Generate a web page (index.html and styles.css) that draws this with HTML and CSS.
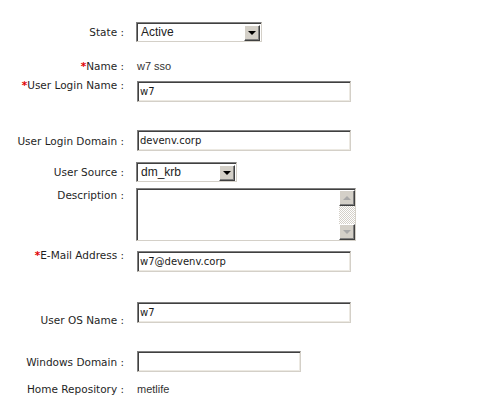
FILE: index.html
```html
<!DOCTYPE html>
<html>
<head>
<meta charset="utf-8">
<link rel="stylesheet" href="styles.css">
</head>
<body>
<form class="form">
  <div class="row r1">
    <label class="label">State :</label>
    <div class="select sel-state"><span class="sel-text">Active</span><span class="sel-btn"><span class="tri"></span></span></div>
  </div>
  <div class="row r2">
    <label class="label"><span class="req">*</span>Name :</label>
    <span class="value">w7 sso</span>
  </div>
  <div class="row r3">
    <label class="label"><span class="req">*</span>User Login Name :</label>
    <div class="input wide">w7</div>
  </div>
  <div class="row r4">
    <label class="label">User Login Domain :</label>
    <div class="input wide">devenv.corp</div>
  </div>
  <div class="row r5">
    <label class="label">User Source :</label>
    <div class="select sel-source"><span class="sel-text">dm_krb</span><span class="sel-btn"><span class="tri"></span></span></div>
  </div>
  <div class="row r6">
    <label class="label">Description :</label>
    <div class="textarea">
      <div class="ta-body"></div>
      <div class="scroll">
        <span class="sb-btn"><span class="tri up"></span></span>
        <span class="sb-track"></span>
        <span class="sb-btn"><span class="tri dn"></span></span>
      </div>
    </div>
  </div>
  <div class="row r7">
    <label class="label"><span class="req">*</span>E-Mail Address :</label>
    <div class="input wide">w7@devenv.corp</div>
  </div>
  <div class="row r8">
    <label class="label">User OS Name :</label>
    <div class="input wide">w7</div>
  </div>
  <div class="row r9">
    <label class="label">Windows Domain :</label>
    <div class="input narrow"></div>
  </div>
  <div class="row r10">
    <label class="label">Home Repository :</label>
    <span class="value">metlife</span>
  </div>
</form>
</body>
</html>
```
FILE: styles.css
```css
html, body { margin: 0; padding: 0; background: #fff; }
body { width: 492px; height: 401px; overflow: hidden; }
.form { display: flex; flex-direction: column; }
.row { display: flex; }
.label {
  width: 124px; margin-right: 12px; text-align: right; flex: none;
  font-family: "DejaVu Sans", sans-serif; font-size: 10.5px; line-height: 14px;
  color: #1f1f1f;
}
.req { color: #e00000; font-weight: bold; }
.value { font-family: "Liberation Sans", Arial, sans-serif; font-size: 11px; line-height: 14px; color: #333; padding-left: 1px; }

.input {
  box-sizing: border-box; height: 21px; margin-left: 1px;
  border-style: solid; border-width: 1px;
  border-color: #808080 #d4d0c8 #d4d0c8 #808080;
  box-shadow: inset 1px 1px 0 #404040, inset -1px -1px 0 #ece9e2;
  background: #fff;
  font-family: "DejaVu Sans", sans-serif; font-size: 10px; line-height: 19px;
  color: #1a1a1a; padding: 0 3px 0 2px;
}
.wide { width: 214px; }
.narrow { width: 164px; }

.select {
  box-sizing: border-box; height: 20px; display: flex; align-items: center;
  border-style: solid; border-width: 1px;
  border-color: #808080 #d4d0c8 #d4d0c8 #808080;
  box-shadow: inset 1px 1px 0 #404040;
  background: #fff;
  font-family: "Liberation Sans", Arial, sans-serif; font-size: 12px; color: #222;
}
.sel-state { width: 126px; }
.sel-source { width: 101px; }
.sel-text { flex: 1; padding-left: 4px; line-height: 16px; }
.sel-btn {
  box-sizing: border-box; width: 16px; height: 16px; margin-right: 1px; margin-top: 1px;
  background: #d4d0c8; display: flex; align-items: center; justify-content: center;
  border-style: solid; border-width: 1px;
  border-color: #fff #404040 #404040 #fff;
  box-shadow: inset -1px -1px 0 #808080;
}
.tri { width: 0; height: 0; border-left: 4px solid transparent; border-right: 4px solid transparent; border-top: 4px solid #000; }

.textarea {
  box-sizing: border-box; width: 220px; height: 53px; display: flex;
  border-style: solid; border-width: 1px;
  border-color: #808080 #d4d0c8 #d4d0c8 #808080;
  box-shadow: inset 1px 1px 0 #404040;
  padding: 1px 0 0 1px;
  background: #fff;
}
.ta-body { flex: 1; }
.scroll { width: 16px; display: flex; flex-direction: column; }
.sb-btn {
  box-sizing: border-box; width: 16px; height: 16px; flex: none;
  background: #d4d0c8; display: flex; align-items: center; justify-content: center;
  border-style: solid; border-width: 1px;
  border-color: #fff #404040 #404040 #fff;
  box-shadow: inset -1px -1px 0 #808080;
}
.sb-btn .tri.up { border-top: 0; border-bottom: 4px solid #a8a8a8; }
.sb-btn .tri.dn { border-top: 4px solid #a8a8a8; }
.sb-track {
  flex: 1;
  background: repeating-conic-gradient(#d4d0c8 0 25%, #fff 0 50%) 0 0 / 2px 2px;
}

.r1 { margin-top: 22px; align-items: center; }
.r2 { margin-top: 17px; align-items: center; }
.r3 { margin-top: 5px; align-items: flex-start; }
.r3 .input { margin-top: 3px; }
.r4 { margin-top: 28px; align-items: center; }
.r5 { margin-top: 11px; align-items: center; }
.r6 { margin-top: 6px; align-items: flex-start; }
.r7 { margin-top: 7px; align-items: flex-start; }
.r7 .input { margin-top: 3px; }
.r8 { margin-top: 30px; align-items: flex-end; }
.r8 .input { margin-bottom: 4px; }
.r9 { margin-top: 24px; align-items: center; }
.r10 { margin-top: 10px; align-items: center; }
```
